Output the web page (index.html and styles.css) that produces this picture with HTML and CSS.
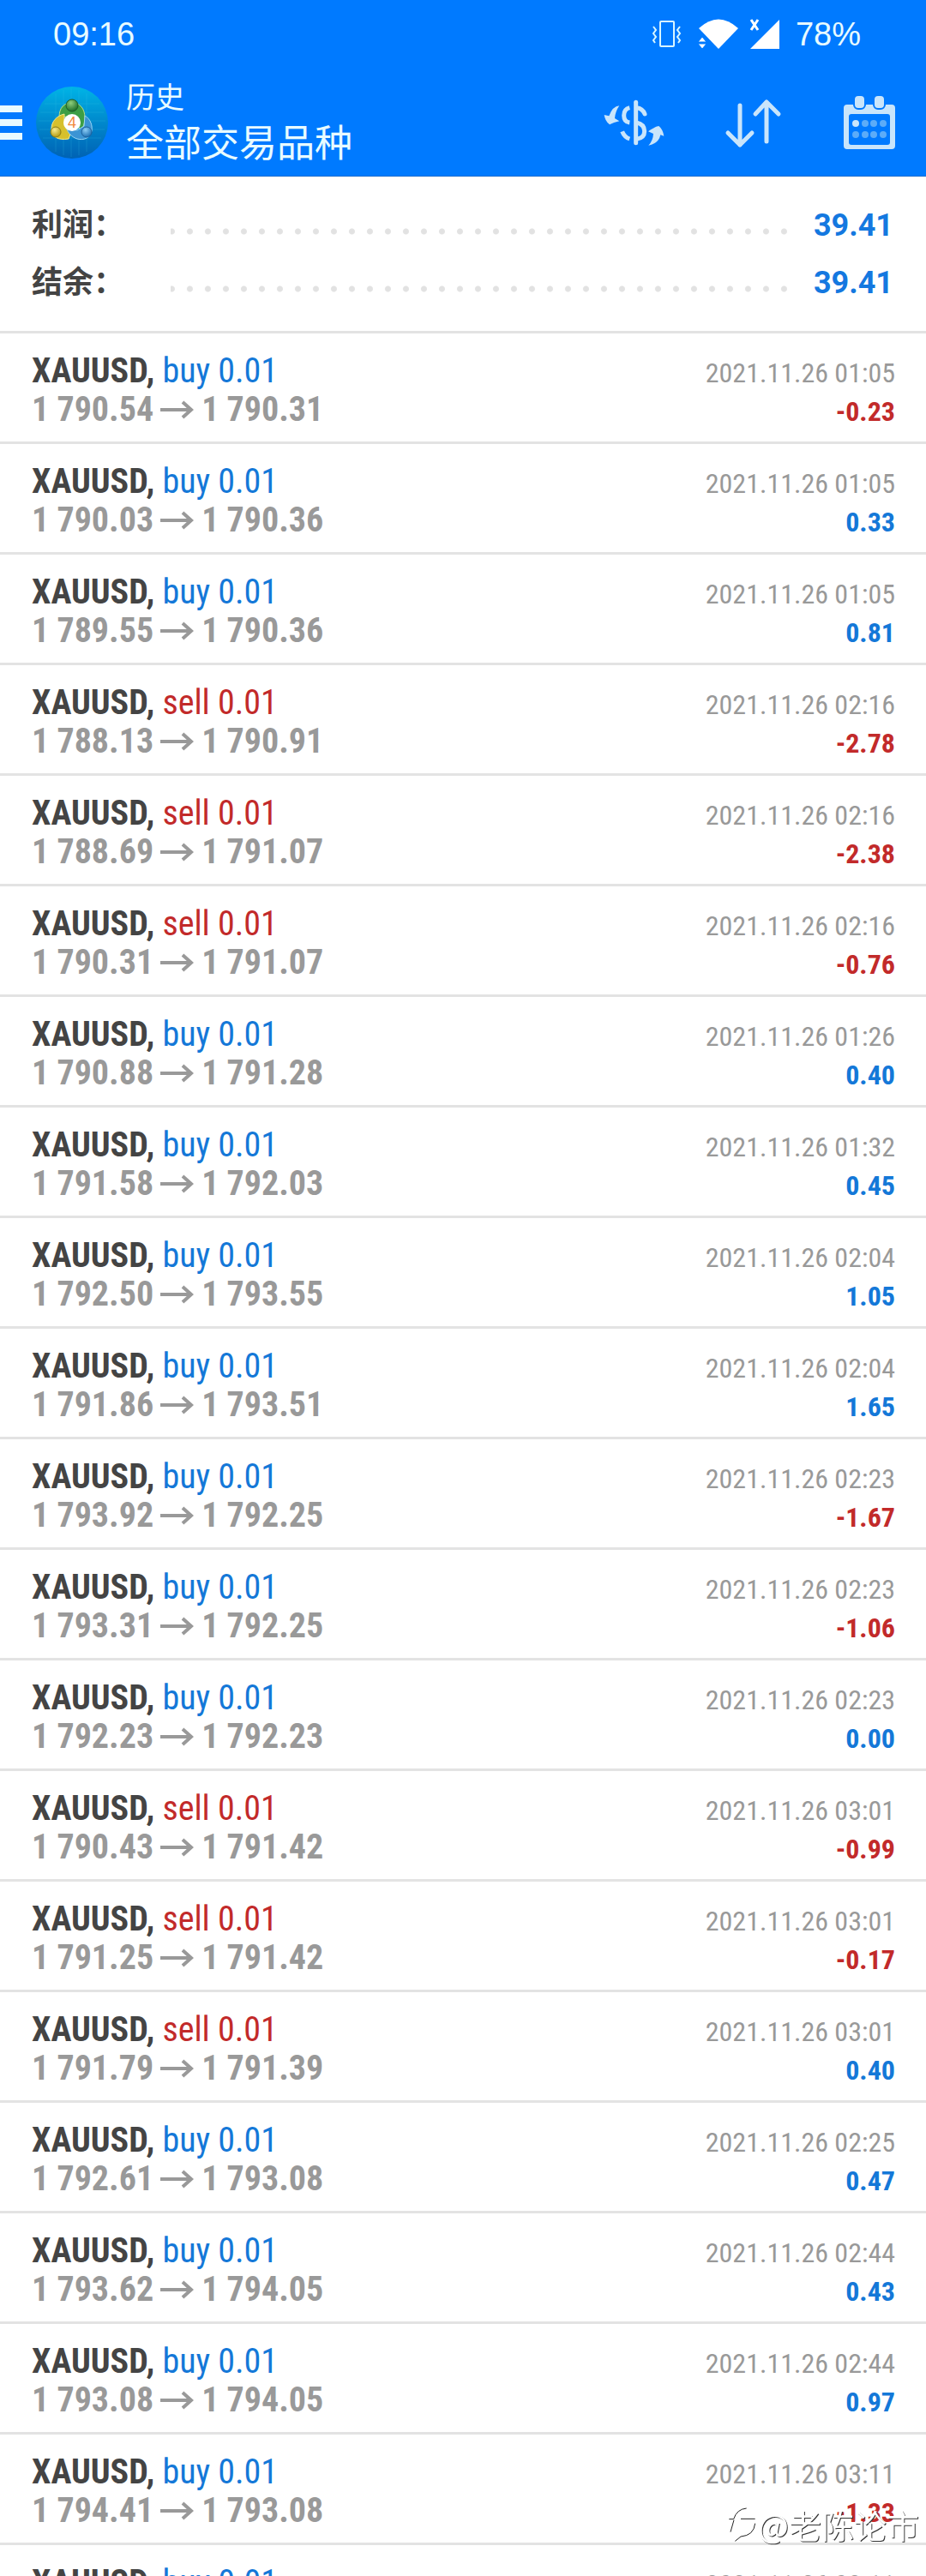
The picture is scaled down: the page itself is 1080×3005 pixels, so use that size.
FILE: index.html
```
<!DOCTYPE html>
<html lang="zh-CN">
<head>
    <meta charset="UTF-8">
    <meta name="viewport" content="width=device-width, initial-scale=1.0">
    <title>历史</title>
    <link rel="stylesheet" href="styles.css">
</head>
<body>
    <header class="header">
        <div class="status-bar">
            <span class="clock">09:16</span>
            <div class="status-icons">
                <svg class="vibrate" width="36" height="34" viewBox="0 0 36 34" fill="none" stroke="#d8f6ff" stroke-width="2">
                    <rect x="10" y="2" width="16" height="29" rx="1"/>
                    <path d="M2 8l3 4-3 4 3 4-3 4 2 3M33 8l-3 4 3 4-3 4 3 4-2 3"/>
                </svg>
                <svg class="wifi" width="48" height="36" viewBox="0 0 48 36" fill="#fff">
                    <path d="M1 11Q24-10 47 11L24 35z"/>
                    <path d="M0 27l5-6 5 6zM0 29h10l-5 6z" stroke="#007aff" stroke-width="1"/>
                </svg>
                <svg class="signal" width="36" height="36" viewBox="0 0 36 36" fill="#fff">
                    <path d="M35 1v34H1z"/>
                    <path d="M2 1l8 12M10 1L2 13" stroke="#fff" stroke-width="3"/>
                </svg>
                <span class="battery">78%</span>
            </div>
        </div>
        <div class="toolbar">
            <button class="menu" aria-label="菜单"><span></span><span></span><span></span></button>
            <svg class="logo" width="84" height="84" viewBox="0 0 84 84">
                <defs>
                    <linearGradient id="disc" x1="0" y1="0" x2="0" y2="1">
                        <stop offset="0" stop-color="#00b4e6"/>
                        <stop offset="0.5" stop-color="#0088cc"/>
                        <stop offset="1" stop-color="#0062b4"/>
                    </linearGradient>
                    <radialGradient id="green" cx="0.4" cy="0.3" r="0.7">
                        <stop offset="0" stop-color="#8fce7c"/>
                        <stop offset="1" stop-color="#1c6e28"/>
                    </radialGradient>
                    <radialGradient id="yellow" cx="0.4" cy="0.3" r="0.7">
                        <stop offset="0" stop-color="#f7ec8e"/>
                        <stop offset="1" stop-color="#b39a12"/>
                    </radialGradient>
                    <radialGradient id="blue" cx="0.4" cy="0.3" r="0.7">
                        <stop offset="0" stop-color="#8ccdf5"/>
                        <stop offset="1" stop-color="#1c6fb4"/>
                    </radialGradient>
                </defs>
                <circle cx="42" cy="42" r="42" fill="url(#disc)"/>
                <path d="M23 8v68M32 4v76M41 2v80M50 4v76M59 8v68M10 20h64M5 30h74M3 40h78M4 50h76M8 60h68" stroke="#3cc8e6" stroke-opacity="0.2"/>
                <g stroke-width="1">
                    <path d="M27 36c0-12 6-17 15-17s15 6 15 18c0 6-2 11-5 14l-7-12-8-4z" fill="#3c9e46" stroke="#b8e08a"/>
                    <path d="M33 32c-9 2-15 9-15 17 0 10 8 14 20 12l3-8-8-8z" fill="#d6c02c" stroke="#f3ea90"/>
                    <path d="M57 34c7 4 9 12 8 18-2 8-9 11-17 9-6-2-11-7-12-12l12 2 8-5z" fill="#3b94d4" stroke="#9ad6f4"/>
                    <circle cx="42" cy="22" r="7" fill="url(#green)" stroke="#1c5c28"/>
                    <circle cx="23" cy="53" r="6" fill="url(#yellow)" stroke="#8c7c14"/>
                    <circle cx="59" cy="53" r="6" fill="url(#blue)" stroke="#1d609c"/>
                </g>
                <circle cx="42" cy="42" r="10" fill="#fff"/>
                <text x="42" y="48" text-anchor="middle" class="logo-digit">4</text>
            </svg>
            <div class="titles">
                <span class="subtitle">历史</span>
                <h1>全部交易品种</h1>
            </div>
            <div class="actions">
                <button aria-label="交易品种">
                    <svg width="71" height="56" viewBox="15 9 213 168" fill="none" stroke="#c9e5fb" stroke-width="15">
                        <path d="M128 22v142" stroke-linecap="round"/>
                        <path d="M106 41Q86 46 86 68t20 25M80 124q8 20 26 26"/>
                        <path d="M130 41q22 2 29 22" stroke-linecap="round"/>
                        <path d="M130 93q28 6 28 30t-28 28"/>
                        <g fill="#c9e5fb" stroke="none">
                            <path d="M70 34Q46 36 34 70L17 66Q20 88 36 100Q50 92 70 88L54 78Q56 54 70 34z"/>
                            <path d="M172 173Q208 166 214 136L226 140Q222 116 208 105Q192 108 171 124L189 132Q188 156 172 173z"/>
                        </g>
                    </svg>
                </button>
                <button aria-label="排序">
                    <svg width="68" height="60" viewBox="0 0 68 60" fill="none" stroke="#c9e5fb" stroke-width="5" stroke-linecap="round" stroke-linejoin="round">
                        <path d="M18 10v46M4 42l14 14 14-14M49 52V6M36 20L49 6l14 14"/>
                    </svg>
                </button>
                <button aria-label="日期">
                    <svg width="62" height="64" viewBox="0 0 62 64">
                        <path d="M5 11h52q4 0 4 4v44q0 4-4 4H5q-4 0-4-4V15q0-4 4-4zM10 22q-3 0-3 3v30q0 3 3 3h42q3 0 3-3V25q0-3-3-3z" fill="#c9e5fb" fill-rule="evenodd"/>
                        <g fill="#c9e5fb" stroke="#007aff" stroke-width="2">
                            <rect x="13" y="0" width="13" height="16" rx="5"/>
                            <rect x="36" y="0" width="13" height="16" rx="5"/>
                        </g>
                        <g fill="#5cacf8">
                            <circle cx="15" cy="33" r="4" fill="#c9e5fb"/>
                            <circle cx="26" cy="33" r="4"/>
                            <circle cx="36" cy="33" r="4"/>
                            <circle cx="47" cy="33" r="4"/>
                            <circle cx="15" cy="46" r="4"/>
                            <circle cx="26" cy="46" r="4"/>
                            <circle cx="36" cy="46" r="4"/>
                            <circle cx="47" cy="46" r="4"/>
                        </g>
                    </svg>
                </button>
            </div>
        </div>
    </header>

    <dl class="summary">
        <div class="summary-row">
            <dt>利润：</dt>
            <dd>39.41</dd>
        </div>
        <div class="summary-row">
            <dt>结余：</dt>
            <dd>39.41</dd>
        </div>
    </dl>

    <ul class="deals" id="deals"></ul>

    <div class="watermark">
        <svg width="32" height="40" viewBox="24 40 96 120" fill="none" stroke="#222" stroke-width="3">
            <path d="M25 81h16Q52 46 86 43M42 84L30 126M66 80h50M116 96Q112 138 66 142L46 158"/>
        </svg>
        <span>@老陈论市</span>
    </div>

    <script>
        // type, open, close, time, profit
        const deals = [
            ['buy', '1 790.54', '1 790.31', '01:05', '-0.23'],
            ['buy', '1 790.03', '1 790.36', '01:05', '0.33'],
            ['buy', '1 789.55', '1 790.36', '01:05', '0.81'],
            ['sell', '1 788.13', '1 790.91', '02:16', '-2.78'],
            ['sell', '1 788.69', '1 791.07', '02:16', '-2.38'],
            ['sell', '1 790.31', '1 791.07', '02:16', '-0.76'],
            ['buy', '1 790.88', '1 791.28', '01:26', '0.40'],
            ['buy', '1 791.58', '1 792.03', '01:32', '0.45'],
            ['buy', '1 792.50', '1 793.55', '02:04', '1.05'],
            ['buy', '1 791.86', '1 793.51', '02:04', '1.65'],
            ['buy', '1 793.92', '1 792.25', '02:23', '-1.67'],
            ['buy', '1 793.31', '1 792.25', '02:23', '-1.06'],
            ['buy', '1 792.23', '1 792.23', '02:23', '0.00'],
            ['sell', '1 790.43', '1 791.42', '03:01', '-0.99'],
            ['sell', '1 791.25', '1 791.42', '03:01', '-0.17'],
            ['sell', '1 791.79', '1 791.39', '03:01', '0.40'],
            ['buy', '1 792.61', '1 793.08', '02:25', '0.47'],
            ['buy', '1 793.62', '1 794.05', '02:44', '0.43'],
            ['buy', '1 793.08', '1 794.05', '02:44', '0.97'],
            ['buy', '1 794.41', '1 793.08', '03:11', '-1.33'],
            ['buy', '', '', '03:11', '']
        ];

        const arrow = '<svg class="arrow" width="40" height="22" viewBox="0 0 40 22" fill="none" stroke="#999" stroke-width="4"><path d="M0 11h36M26 2l10 9-10 9"/></svg>';
        const list = document.getElementById('deals');

        deals.forEach(([type, open, close, time, profit]) => {
            const li = document.createElement('li');
            li.className = 'deal';
            li.innerHTML = `
                <div class="line">
                    <span class="symbol">XAUUSD, <span class="${type}">${type} 0.01</span></span>
                    <time>2021.11.26 ${time}</time>
                </div>`;
            if (open) {
                li.innerHTML += `
                <div class="line">
                    <span class="prices">${open}${arrow}${close}</span>
                    <span class="profit ${profit < 0 ? 'loss' : ''}">${profit}</span>
                </div>`;
            }
            list.appendChild(li);
        });
    </script>
</body>
</html>
```
FILE: styles.css
```
* {
    box-sizing: border-box;
}
body {
    margin: 0;
    height: 100vh;
    overflow: hidden;
    background-color: #fff;
    color: #444;
    font-family: Roboto, "Noto Sans CJK SC", sans-serif;
}
button {
    padding: 0;
    border: none;
    background: none;
    cursor: pointer;
}
svg {
    display: block;
}
.header {
    background-color: #007aff;
    border-bottom: 1px solid #1a6fd0;
    color: #e8fbff;
}
.status-bar {
    display: flex;
    justify-content: space-between;
    align-items: center;
    height: 80px;
    padding: 0 76px 0 62px;
    font-family: "Liberation Sans", sans-serif;
    font-size: 38px;
}
.status-icons {
    display: flex;
    align-items: center;
}
.wifi {
    margin-left: 18px;
}
.signal {
    margin-left: 12px;
}
.battery {
    margin-left: 18px;
}
.toolbar {
    display: flex;
    align-items: center;
    height: 125px;
    padding-right: 35px;
}
.menu {
    display: flex;
    flex-direction: column;
    gap: 8px;
    width: 26px;
}
.menu span {
    height: 8px;
    background-color: #e8fbff;
}
.logo {
    margin-left: 16px;
}
.logo-digit {
    font-family: "Liberation Sans", sans-serif;
    font-size: 18px;
    fill: #f08a3c;
}
.titles {
    margin-left: 21px;
    padding-top: 2px;
}
.subtitle {
    display: block;
    font-size: 34px;
    line-height: 48px;
}
h1 {
    margin: 0;
    font-size: 44px;
    font-weight: normal;
    line-height: 60px;
}
.actions {
    display: flex;
    align-items: center;
    gap: 70px;
    margin-left: auto;
}
.summary {
    margin: 0;
    padding: 24px 38px 22px 37px;
    border-bottom: 3px solid #e3e3e3;
}
.summary-row {
    display: flex;
    align-items: baseline;
    height: 67px;
    font-size: 36px;
    line-height: 67px;
    font-weight: bold;
}
.summary-row::before {
    content: "";
    order: 1;
    flex: 1;
    height: 10px;
    margin: 0 24px 0 54px;
    background: radial-gradient(circle, #e2e2e2 3px, transparent 4px) right / 21px 10px repeat-x;
}
.summary dd {
    order: 2;
    margin: 0;
    color: #1478e0;
}
.deals {
    margin: 0;
    padding: 0;
    list-style: none;
    font-family: "Roboto Condensed", "Liberation Sans Narrow", sans-serif;
}
.deal {
    height: 129px;
    padding: 21px 36px 0 37px;
    border-bottom: 3px solid #e3e3e3;
}
.line {
    display: flex;
    justify-content: space-between;
    align-items: baseline;
    height: 45px;
    font-size: 40px;
    line-height: 45px;
    font-weight: bold;
    white-space: nowrap;
}
.buy, .sell {
    font-weight: normal;
}
.buy {
    color: #1478d8;
}
.sell {
    color: #c22a2a;
}
.prices {
    display: flex;
    align-items: center;
    gap: 8px;
    color: #999;
}
time {
    color: #999;
    font-size: 32px;
    font-weight: normal;
}
.profit {
    color: #1478d8;
    font-size: 32px;
}
.loss {
    color: #c22a2a;
}
.watermark {
    position: fixed;
    right: 8px;
    bottom: 36px;
    display: flex;
    align-items: center;
    gap: 2px;
    color: #fff;
    font-family: "Noto Sans CJK SC", sans-serif;
    font-size: 38px;
    line-height: 48px;
    text-shadow: 1px 1px 0 #333;
}
```
